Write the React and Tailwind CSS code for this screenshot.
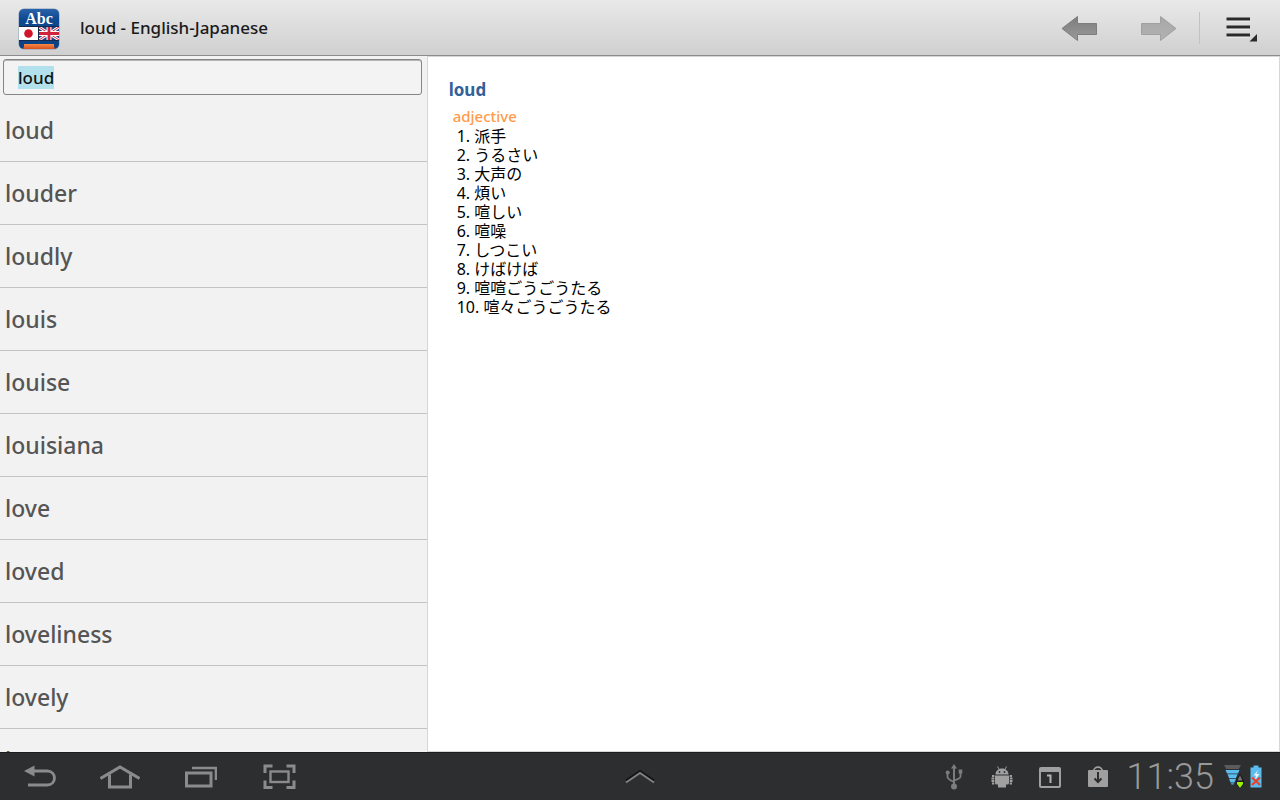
import { useEffect, useRef } from "react";

const words = [
  "loud",
  "louder",
  "loudly",
  "louis",
  "louise",
  "louisiana",
  "love",
  "loved",
  "loveliness",
  "lovely",
  "lover",
];

const meanings = [
  "派手",
  "うるさい",
  "大声の",
  "煩い",
  "喧しい",
  "喧噪",
  "しつこい",
  "けばけば",
  "喧喧ごうごうたる",
  "喧々ごうごうたる",
];

function AppLogo() {
  return (
    <svg width="42" height="42" viewBox="0 0 42 42" className="mt-[3px]" aria-hidden="true">
      <defs>
        <linearGradient id="logoBlue" x1="0" y1="0" x2="0" y2="1">
          <stop offset="0" stopColor="#2a62a8" />
          <stop offset="0.25" stopColor="#0d4a92" />
          <stop offset="1" stopColor="#0c3f80" />
        </linearGradient>
        <linearGradient id="logoOrange" x1="0" y1="0" x2="0" y2="1">
          <stop offset="0" stopColor="#f58a4a" />
          <stop offset="1" stopColor="#d9501c" />
        </linearGradient>
        <clipPath id="logoClip">
          <rect x="1" y="1" width="40" height="40" rx="5" />
        </clipPath>
      </defs>
      <rect x="0.5" y="0.5" width="41" height="41" rx="5.5" fill="#8aa0bd" />
      <g clipPath="url(#logoClip)">
        <rect x="1" y="1" width="40" height="40" fill="url(#logoBlue)" />
        <text
          x="21"
          y="15.5"
          textAnchor="middle"
          fontFamily="'Liberation Serif', serif"
          fontWeight="bold"
          fontSize="16"
          fill="#fff"
        >
          Abc
        </text>
        <rect x="1" y="19" width="19" height="13" fill="#fff" />
        <circle cx="10.500" cy="25.500" r="4.300" fill="#d0142c" />
        <rect x="21" y="19" width="20" height="13" fill="#27407f" />
        <path d="M21 19L41 32M41 19L21 32" stroke="#fff" strokeWidth="2.800" />
        <path d="M21 19L41 32M41 19L21 32" stroke="#d0243c" strokeWidth="1" />
        <path d="M31 19V32M21 25.500H41" stroke="#fff" strokeWidth="5" />
        <path d="M31 19V32M21 25.500H41" stroke="#d0243c" strokeWidth="2.800" />
        <path d="M1 18.500H41M1 32.500H41M20.500 19V32" stroke="#16294d" strokeWidth="1" />
        <path d="M6 36H36V37.500Q36 39 37 41H5Q6 39 6 37.500Z" fill="url(#logoOrange)" />
      </g>
    </svg>
  );
}

function HeaderArrow({ forward }) {
  return (
    <svg width="36" height="26" viewBox="0 0 36 26" aria-hidden="true">
      <defs>
        <linearGradient id="arrowDark" x1="0" y1="0" x2="0" y2="1">
          <stop offset="0" stopColor="#7c7c7c" />
          <stop offset="1" stopColor="#9a9a9a" />
        </linearGradient>
        <linearGradient id="arrowLight" x1="0" y1="0" x2="0" y2="1">
          <stop offset="0" stopColor="#a6a6a6" />
          <stop offset="1" stopColor="#b3b3b3" />
        </linearGradient>
      </defs>
      {forward ? (
        <path
          d="M35 13.500L19.500 1.500V8.500H0.500V19.500H19.500V25.500Z"
          fill="url(#arrowLight)"
          stroke="#a0a0a0"
        />
      ) : (
        <path
          d="M1 13.500L16.500 1.500V8.500H35.500V19.500H16.500V25.500Z"
          fill="url(#arrowDark)"
          stroke="#7d7d7d"
        />
      )}
    </svg>
  );
}

function MenuIcon() {
  return (
    <svg width="32" height="28" viewBox="0 0 32 28" aria-hidden="true">
      <path d="M0.500 6.500H23.500M0.500 14.500H23.500M0.500 22.500H23.500" stroke="#f4f4f4" strokeWidth="2" />
      <path d="M0.500 5H24M0.500 13H24M0.500 21H24" stroke="#2a2a2a" strokeWidth="3" />
      <path d="M31 20V27.500H23.500Z" fill="#2a2a2a" />
    </svg>
  );
}

function NavBack() {
  return (
    <svg width="34" height="24" viewBox="0 0 34 24" fill="none" aria-hidden="true">
      <path d="M10 6H24C34 6 34 20 24 20H5" stroke="#8b8b8b" strokeWidth="2.800" />
      <path d="M1 6L11.500 0.500V11.500Z" fill="#8b8b8b" />
    </svg>
  );
}

function NavHome() {
  return (
    <svg width="40" height="24" viewBox="0 0 40 24" fill="none" aria-hidden="true">
      <path d="M0.500 13.500L20 2L39.500 13.500" stroke="#8b8b8b" strokeWidth="3" />
      <path d="M9.500 9.500V22H30.500V9.500" stroke="#8b8b8b" strokeWidth="3" />
    </svg>
  );
}

function NavRecent() {
  return (
    <svg width="34" height="24" viewBox="0 0 34 24" fill="none" aria-hidden="true">
      <rect x="3.500" y="8" width="24.500" height="13" stroke="#8b8b8b" strokeWidth="3" />
      <path d="M9 3H33V15" stroke="#8b8b8b" strokeWidth="2.600" />
    </svg>
  );
}

function NavCapture() {
  return (
    <svg width="34" height="26" viewBox="0 0 34 26" fill="none" aria-hidden="true">
      <rect x="7.500" y="7.500" width="18" height="10.500" stroke="#8b8b8b" strokeWidth="2.400" />
      <path
        d="M9.500 2H2V9M23.500 2H31V9M2 16.500V23.500H9.500M31 16.500V23.500H23.500"
        stroke="#8b8b8b"
        strokeWidth="3"
      />
    </svg>
  );
}

function UsbIcon() {
  return (
    <svg width="22" height="26" viewBox="-2 0 22 26" fill="none" aria-hidden="true">
      <path d="M9 3V22" stroke="#7d7d7d" strokeWidth="2" />
      <path d="M2.500 9V13Q2.500 15 9 18M15.500 8V12.500Q15.500 14.500 9 16.500" stroke="#7d7d7d" strokeWidth="1.800" />
      <path d="M9 0L12 4.500H6Z" fill="#7d7d7d" />
      <circle cx="9" cy="22.500" r="3" fill="#7d7d7d" />
      <circle cx="2.700" cy="8.500" r="2" fill="#7d7d7d" />
      <rect x="13.700" y="5.500" width="3.600" height="4" fill="#7d7d7d" />
    </svg>
  );
}

function RobotIcon() {
  return (
    <svg width="22" height="22" viewBox="0 0 22 22" aria-hidden="true">
      <path d="M4.500 8.500C4.500 5 7.500 2.500 11 2.500S17.500 5 17.500 8.500Z" fill="#a0a0a0" />
      <path d="M6.500 0.500L8.500 4M15.500 0.500L13.500 4" stroke="#a0a0a0" strokeWidth="1" />
      <circle cx="8.500" cy="6" r="0.900" fill="#2d2e30" />
      <circle cx="13.500" cy="6" r="0.900" fill="#2d2e30" />
      <path d="M4 9.500H18V17Q18 18.500 16 18.500H15V21.500H7V18.500H6Q4 18.500 4 17Z" fill="#a0a0a0" />
      <path
        d="M1 10H3.300M0.500 12.500H3.300M0.500 15H3.300M1 17.500H3.300M18.700 10H21M18.700 12.500H21.500M18.700 15H21.500M18.700 17.500H21"
        stroke="#a0a0a0"
        strokeWidth="1.800"
      />
    </svg>
  );
}

function CalendarIcon() {
  return (
    <svg width="22" height="22" viewBox="0 0 22 22" fill="none" aria-hidden="true">
      <rect x="1" y="2" width="20" height="19" rx="1" stroke="#a0a0a0" strokeWidth="2" />
      <path d="M1 4H21" stroke="#a0a0a0" strokeWidth="4" />
      <path d="M8 9.500H11.500V17" stroke="#b4b4b4" strokeWidth="2" />
    </svg>
  );
}

function DownloadBagIcon() {
  return (
    <svg width="22" height="22" viewBox="0 0 22 22" fill="none" aria-hidden="true">
      <path d="M6.500 6C6.500 -0.500 15.500 -0.500 15.500 6" stroke="#a0a0a0" strokeWidth="1.600" />
      <rect x="1" y="4" width="20" height="17" rx="1" fill="#a0a0a0" />
      <path d="M11 6V16M7.500 12.500L11 16L14.500 12.500" stroke="#2d2e30" strokeWidth="2" />
    </svg>
  );
}

function SignalIcon() {
  return (
    <svg width="20" height="25" viewBox="0 0 20 25" aria-hidden="true">
      <path d="M0 1H17L14.800 5H2.200Z" fill="#5b5b5b" />
      <path d="M1.500 6H15.500L14 9.500H3Z" fill="#5bbcf0" />
      <path d="M3.500 10.300H13.500L12 14H5Z" fill="#5bbcf0" />
      <path d="M5 14.800H12L10.500 18.500H6.500Z" fill="#5bbcf0" />
      <path d="M7 19.300H10L9.500 20.500H7.500Z" fill="#5bbcf0" />
      <path d="M16 10L20 16V20L16 25L12 20V16Z" fill="#1c1c1c" />
      <path d="M16 11.500L18.500 16.500H13.500Z" fill="#777" />
      <path d="M13 18H19V20L16 24L13 20Z" fill="#9bf005" />
    </svg>
  );
}

function BatteryIcon() {
  return (
    <svg width="12" height="24" viewBox="0 0 12 24" aria-hidden="true">
      <path d="M3.500 0.500H8.500V2.500H11.500V22.500H0.500V2.500H3.500Z" fill="#5bbcf0" />
      <path d="M8 5L3.500 10.500H6L5 15L9.500 9H6.500Z" fill="#e8f5fd" />
      <path d="M2 12.500L10 20M10 12.500L2 20" stroke="#e8432a" strokeWidth="2.200" />
    </svg>
  );
}

export default function App() {
  const search = useRef(null);

  useEffect(() => {
    search.current.focus();
    search.current.select();
  }, []);

  return (
    <div className="flex h-screen flex-col overflow-hidden bg-[#f2f2f2] font-['Noto_Sans','Noto_Sans_CJK_JP',sans-serif]">
      <header className="flex h-14 shrink-0 items-center border-b border-[#8c8c8c] bg-linear-to-b from-[#e9e9e9] to-[#d0d0d0] pl-[18px]">
        <AppLogo />
        <h1 className="ml-5 flex-1 text-[17px] font-medium text-[#1a1a1a]">loud - English-Japanese</h1>
        <button type="button" aria-label="Back" className="flex h-full w-20 items-center justify-center">
          <HeaderArrow />
        </button>
        <button type="button" aria-label="Forward" className="flex h-full w-20 items-center justify-center">
          <HeaderArrow forward />
        </button>
        <div className="h-8 w-px bg-[#c2c2c2]" />
        <button type="button" aria-label="Menu" className="flex h-full w-20 items-center justify-center pl-1">
          <MenuIcon />
        </button>
      </header>

      <main className="flex min-h-0 flex-1">
        <aside className="flex w-1/3 shrink-0 flex-col overflow-hidden">
          <div className="h-[43px] shrink-0 pt-[3px] pr-[5px] pl-[3px]">
            <input
              ref={search}
              type="text"
              aria-label="Search word"
              defaultValue="loud"
              className="h-9 w-full rounded-[3px] border border-[#858585] bg-[#f3f3f3] px-3.5 text-[17px] font-medium text-[#111] shadow-[inset_0_1px_0_#b5b5b5] outline-none selection:bg-[#b2e0ec] selection:text-[#111]"
            />
          </div>
          <ul className="min-h-0 flex-1 overflow-hidden">
            {words.map((word) => (
              <li key={word} className="border-b border-[#c4c4c4]">
                <button type="button" className="block h-[62px] w-full px-[5px] text-left text-[23px] font-medium text-[#555]">
                  {word}
                </button>
              </li>
            ))}
          </ul>
        </aside>

        <article className="flex-1 border border-[#d6d6d6] bg-white px-[21px] pt-[21px]">
          <h2 className="text-[17px] leading-6 font-bold text-[#336199]">loud</h2>
          <p className="mt-1 pl-1 text-[15px] leading-[21px] font-medium text-[#ff9a4d]">adjective</p>
          <ol className="pl-2 text-[16px] leading-[19px] text-black">
            {meanings.map((meaning, i) => (
              <li key={meaning}>
                {i + 1}. <span lang="ja">{meaning}</span>
              </li>
            ))}
          </ol>
        </article>
      </main>

      <footer className="grid h-12 shrink-0 grid-cols-[1fr_auto_1fr] items-stretch border-t border-[#1c1d1f] bg-[#2d2e30]">
        <div className="flex">
          <button type="button" aria-label="Back" className="flex w-20 items-center justify-center">
            <NavBack />
          </button>
          <button type="button" aria-label="Home" className="flex w-20 items-center justify-center">
            <NavHome />
          </button>
          <button type="button" aria-label="Recent apps" className="flex w-20 items-center justify-center">
            <NavRecent />
          </button>
          <button type="button" aria-label="Screen capture" className="flex w-20 items-center justify-center">
            <NavCapture />
          </button>
        </div>
        <button type="button" aria-label="Open tray" className="flex w-20 items-center justify-center">
          <svg width="30" height="14" viewBox="0 0 30 14" fill="none" aria-hidden="true">
            <path d="M1 10.500L15 1L29 10.500" stroke="#111" strokeWidth="2" />
            <path d="M1 12.500L15 3L29 12.500" stroke="#808080" strokeWidth="2" />
          </svg>
        </button>
        <div className="flex items-center justify-end pr-[18px]">
          <div className="flex items-center gap-[26px]">
            <UsbIcon />
            <RobotIcon />
            <CalendarIcon />
            <DownloadBagIcon />
          </div>
          <time className="ml-[18px] font-['Roboto',sans-serif] text-[36px] leading-none font-light text-[#999]">11:35</time>
          <div className="ml-2.5 flex items-center gap-1.5">
            <SignalIcon />
            <BatteryIcon />
          </div>
        </div>
      </footer>
    </div>
  );
}
